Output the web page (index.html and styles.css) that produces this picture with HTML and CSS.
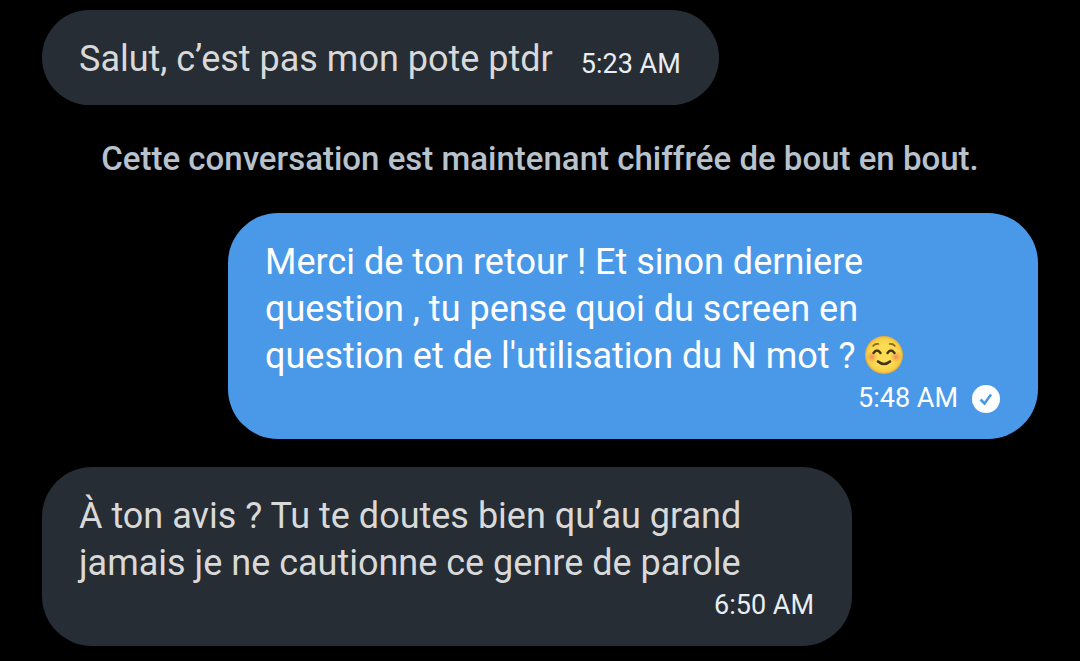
FILE: index.html
```html
<!DOCTYPE html>
<html lang="fr">

<head>
    <meta charset="UTF-8">
    <meta name="viewport" content="width=device-width, initial-scale=1.0">
    <title>Messages</title>
    <link rel="stylesheet" href="styles.css">
</head>

<body>
<main class="chat">
    <div class="bubble received short">
        <p class="text">Salut, c’est pas mon pote ptdr</p>
        <div class="meta"><time datetime="05:23">5:23 AM</time></div>
    </div>

    <p class="notice">Cette conversation est maintenant chiffrée de bout en bout.</p>

    <div class="bubble sent">
        <p class="text">Merci de ton retour ! Et sinon derniere question , tu pense quoi du screen en question et de l'utilisation du N mot ?
            <svg class="emoji" viewBox="0 0 40 40" role="img" aria-label="Visage souriant">
                <defs>
                    <radialGradient id="face" cx="50%" cy="50%" r="50%">
                        <stop offset="60%" stop-color="#fbdc52"/>
                        <stop offset="88%" stop-color="#f6cd48"/>
                        <stop offset="100%" stop-color="#e2a93a"/>
                    </radialGradient>
                    <radialGradient id="blush">
                        <stop offset="0%" stop-color="#f08a5c"/>
                        <stop offset="100%" stop-color="#f3a050" stop-opacity="0"/>
                    </radialGradient>
                </defs>
                <circle cx="20" cy="20" r="19" fill="url(#face)"/>
                <circle cx="8" cy="22" r="6" fill="url(#blush)"/>
                <circle cx="32" cy="22" r="6" fill="url(#blush)"/>
                <path d="M9 11Q11 8.5 14.5 9M25.5 9Q29 8.5 31 11" fill="none" stroke="#8a6420" stroke-width="1.6" stroke-linecap="round"/>
                <path d="M9.5 18Q13 13 16.5 18M23.5 18Q27 13 30.5 18" fill="none" stroke="#45341c" stroke-width="2.4" stroke-linecap="round"/>
                <path d="M14 26.5Q20 31.5 26 26.5" fill="none" stroke="#45341c" stroke-width="2.6" stroke-linecap="round"/>
            </svg></p>
        <div class="meta">
            <time datetime="05:48">5:48 AM</time>
            <svg class="check" viewBox="0 0 28 28" role="img" aria-label="Envoyé">
                <circle cx="14" cy="14" r="14" fill="#fff"/>
                <path d="M8.5 14.5l4 4 6.5-9" fill="none" stroke="#4a99e9" stroke-width="2.6"/>
            </svg>
        </div>
    </div>

    <div class="bubble received">
        <p class="text">À ton avis ? Tu te doutes bien qu’au grand jamais je ne cautionne ce genre de parole</p>
        <div class="meta"><time datetime="06:50">6:50 AM</time></div>
    </div>
</main>
</body>

</html>
```
FILE: styles.css
```css
body {
    margin: 0;
    background: #000;
    font-family: Roboto, "Noto Sans", sans-serif;
}

.chat {
    display: flex;
    flex-direction: column;
    align-items: flex-start;
    padding: 10px 42px 15px;
}

.bubble {
    box-sizing: border-box;
    max-width: 810px;
    padding: 26px 38px 22px 37px;
    border-radius: 50px;
}

.received {
    background: #262d34;
    color: #d9d9d9;
}

.sent {
    align-self: flex-end;
    margin-bottom: 28px;
    background: #4a99e9;
    color: #fff;
}

.text {
    margin: 0;
    font-size: 36px;
    line-height: 47px;
}

.meta {
    display: flex;
    justify-content: flex-end;
    align-items: center;
    gap: 14px;
    font-size: 27px;
    line-height: 37px;
}

.received .meta {
    color: #e8edf2;
}

.short {
    display: flex;
    align-items: flex-end;
    gap: 28px;
}

.notice {
    align-self: center;
    margin: 32px 0;
    color: #b8c2cc;
    font-size: 33px;
    font-weight: 500;
    line-height: 44px;
}

.emoji {
    width: 40px;
    height: 40px;
    vertical-align: -7px;
}

.check {
    width: 28px;
    height: 28px;
}
```
